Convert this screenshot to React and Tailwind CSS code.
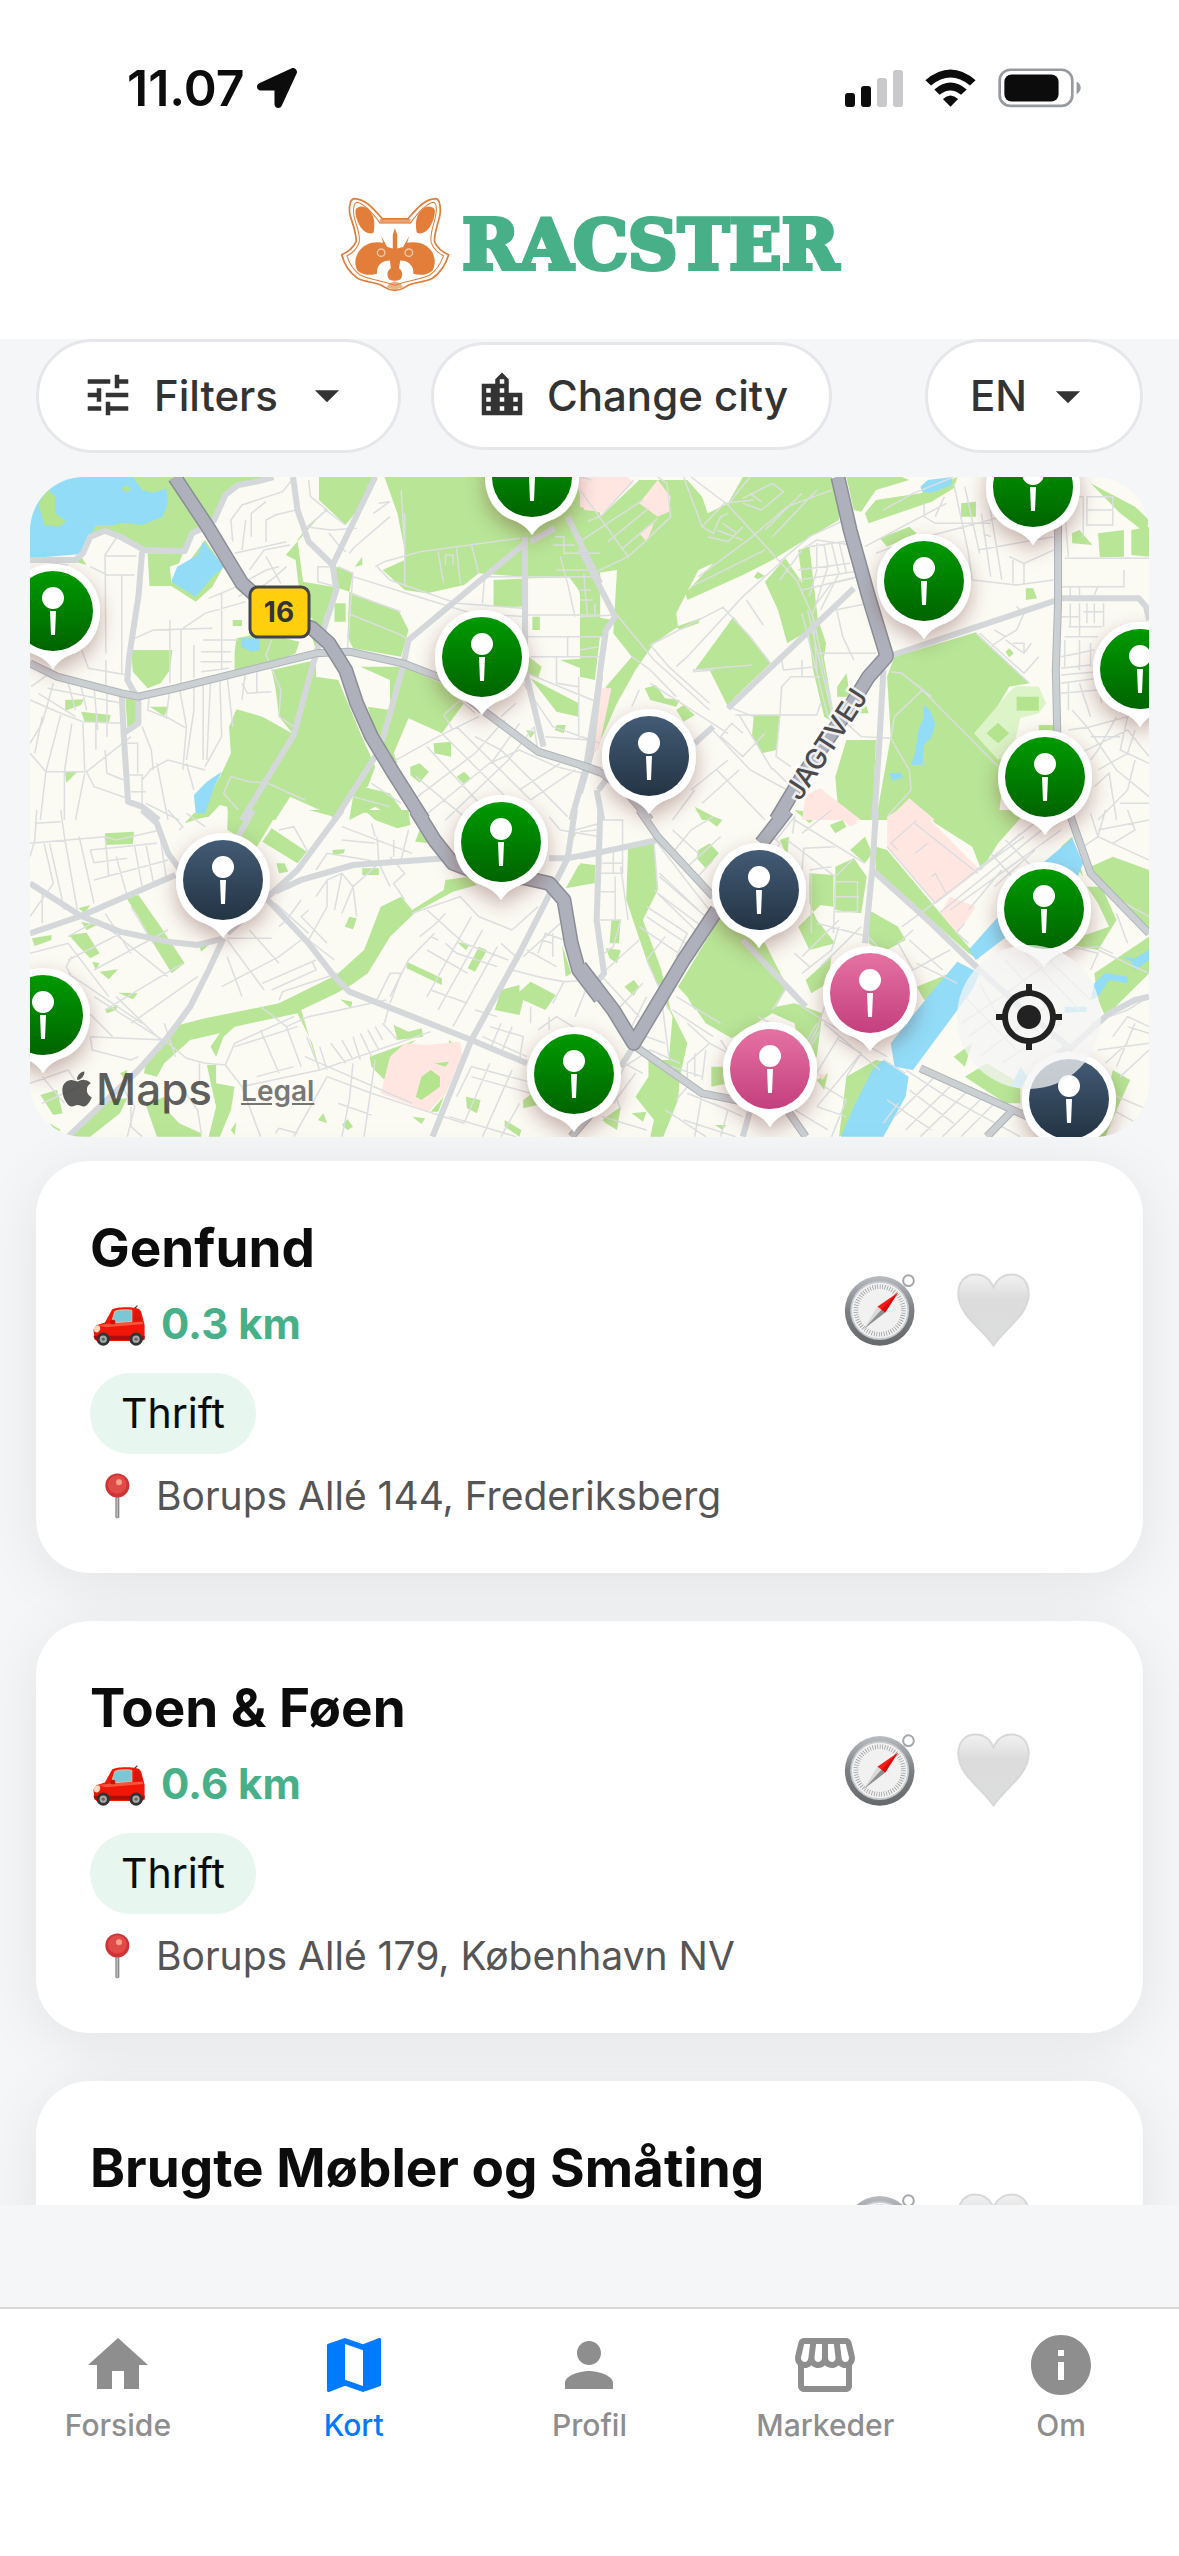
import { useState } from "react";
import {
  MdArrowDropDown,
  MdHome,
  MdInfo,
  MdLocationCity,
  MdMap,
  MdMyLocation,
  MdPerson,
  MdStorefront,
  MdTune,
} from "react-icons/md";
import { FaApple, FaLocationArrow } from "react-icons/fa";

const shops = [
  { id: 1, name: "Genfund", distance: "0.3 km", type: "Thrift", address: "Borups Allé 144, Frederiksberg" },
  { id: 2, name: "Toen & Føen", distance: "0.6 km", type: "Thrift", address: "Borups Allé 179, København NV" },
  { id: 3, name: "Brugte Møbler og Småting" },
];

const tabs = [
  { label: "Forside", Icon: MdHome },
  { label: "Kort", Icon: MdMap },
  { label: "Profil", Icon: MdPerson },
  { label: "Markeder", Icon: MdStorefront },
  { label: "Om", Icon: MdInfo },
];

const markers = [
  { x: 502, y: 0, color: "green" },
  { x: 1003, y: 10, color: "green" },
  { x: 23, y: 134, color: "green" },
  { x: 894, y: 104, color: "green" },
  { x: 452, y: 180, color: "green" },
  { x: 1110, y: 192, color: "green" },
  { x: 619, y: 279, color: "navy" },
  { x: 1015, y: 300, color: "green" },
  { x: 471, y: 365, color: "green" },
  { x: 193, y: 403, color: "navy" },
  { x: 729, y: 413, color: "navy" },
  { x: 1014, y: 432, color: "green" },
  { x: 840, y: 516, color: "pink" },
  { x: 13, y: 538, color: "green" },
  { x: 740, y: 592, color: "pink" },
  { x: 544, y: 597, color: "green" },
  { x: 1039, y: 622, color: "navy" },
];

// The map is stored as four tiles, each one with its own coordinates
const tiles = [
  {
    id: "nw",
    transform: "matrix(0.37 0 0 0.3333 -10 -7)",
    parks:
      "M305 21H680L640 42L580 50L550 80L525 145L495 180L470 190L445 240L330 240L270 200L230 178L195 190L165 260L180 285L150 275L190 165L300 150ZM345 250H440L430 280L405 290L410 348H350ZM500 210L550 290L520 350L475 395L405 345L440 300ZM808 21H965L940 80L880 165L808 90ZM985 21H1568V320L1380 325L1280 330V410H1360V320L1240 310L1200 345L1100 370L1040 360L980 300L1040 270V240L1020 130ZM826 118L770 180L750 210L765 335L845 350L850 370L815 460L780 440L752 340L745 270L718 255ZM855 290L900 310L890 365L850 350ZM890 365L1025 425L1050 480L1030 560L900 535L885 500ZM850 400H880V455H850ZM780 450L835 440L820 480L800 540L780 470ZM575 450H600V468H575ZM585 505L650 490L700 500L755 515L745 550L680 580L630 605L580 600V545ZM300 540H412L405 600L380 640L345 655L305 605ZM122 690L172 688L165 705L122 722ZM165 725L245 735L240 758L175 755ZM285 685H325V760L290 770ZM350 710H400L390 738ZM680 600L800 570L800 620L860 630L920 790L960 890L940 950L880 990L855 1050L830 1030L730 980L690 1050H610L660 940L740 795L700 740L690 650ZM585 718L655 740L735 790L740 820L670 940L600 1050H565L560 1010L540 1005L510 1040L455 1050L500 1000L545 910L570 850L565 770ZM890 590L1035 590L1140 640L1200 700L1140 790L1050 745L1010 850L1020 880L975 850L940 710L1000 720L1000 630L920 590ZM905 945L1000 970L1050 1050H1020L960 1010L890 1050ZM1055 890L1080 880L1105 905L1080 938L1055 915ZM1118 820L1165 815L1165 860L1120 850ZM1180 920L1200 905L1218 925L1200 943ZM1368 780L1392 785L1380 805ZM1375 560L1410 590L1400 625L1370 610ZM1460 570L1545 565L1555 630L1515 595ZM1380 625L1510 700L1510 740L1450 725ZM122 905L155 905L125 938ZM1450 765L1475 765L1470 790L1445 780ZM1505 260L1568 320V500L1530 440L1510 360L1470 300ZM1385 440H1405V480H1385ZM905 290L925 260L925 285Z",
    water:
      "M27 21H305L330 60L360 68L395 55L400 100L385 140L330 165L285 158L250 165L205 165L190 200L165 252L27 265ZM495 215L552 290L520 320L475 380L408 335L425 290L480 255ZM597 505H648V540L625 545L597 530ZM545 905L525 950L500 1030L475 1030L470 975L505 935Z",
    islands: "M50 100L75 60L95 80L95 130L125 155L105 170L65 165ZM275 55L285 45L300 58L288 68Z",
    built: "M1500 21H1568V125L1525 120Z",
    streets:
      "M265 195L230 255L232 550M230 258H315M190 290L235 315H310M275 315V610M140 480L160 520L185 595L290 615M232 570V670M30 270L130 285M310 505L360 480L520 475M405 450V640M435 480V640M470 525V625M495 510H590M490 545H570M488 575H572M490 605L565 595M440 475L500 430L610 395M545 370V600M510 385L575 355L665 300L700 290M580 250L720 215M620 300L660 240L730 225M575 215L570 150L600 105L710 65L735 30M625 200V130L665 95M665 215V150L690 135L745 120M610 150L600 240M630 370L690 320L720 290M665 260L705 340M590 380L640 345M780 30L785 80L830 120L770 175M820 115L880 165M770 170L840 180L910 175M835 190L865 230L880 245M890 250L905 230L1000 140M955 130L1000 95L970 100M960 290L985 275L1080 245L1350 205M965 290L1000 330L1180 400L1360 415M900 320L1060 375L1220 430L1370 440M890 370L1030 425M885 430L1020 490L1045 505M860 290L900 310L885 535M845 290L805 290V335L855 350M1040 130V350M1030 60L1040 240M1130 245L1145 340M1180 235L1190 340M1150 285V255H1170V285M1220 225L1240 310M1245 320H1568M1255 330L1250 400M1445 200H1470V250H1568M1460 260L1480 340L1500 440M1440 225H1500M1450 300H1550M1370 435H1568M1370 500H1568M1380 560H1568M1450 560V640L1510 650M1480 500V560M1370 610L1568 700M1360 640L1440 770L1568 820M1510 620V810M680 510L665 555L705 660L700 740L740 770L740 795M600 640L615 670L680 665M640 600V670M610 600L600 690M470 650V720L450 870M495 640V870M515 630L505 870M540 625L545 800L500 890M560 620L575 770M430 650L450 770L440 900M405 660L395 740L450 775M350 670L345 720L400 745M30 650L80 610M50 670L150 740M27 690L110 730L170 755L275 760M90 640L60 760L27 820M130 640L150 720M165 650L180 720M200 650L210 780M235 660V800M75 655L275 700M27 850L70 905L180 905L300 800M60 740L40 850M110 735L70 905M140 760L120 905M170 760L175 905M205 760V840M180 905L200 950L290 985M70 905L55 1050M120 905V1050M175 910L150 1050M230 840L235 910L280 930M290 820H318V910M295 915H330V1000M300 965H340M330 770L355 840L360 900M350 900L400 870L500 900M330 930L360 890M340 1000L430 1050M370 880L400 1050M450 880L470 960M550 970L570 920L620 935L670 940L770 990M550 970L590 1020M900 980L1000 1010M950 940L1030 1000M1000 880L1130 800L1240 740M1010 900L1070 1050M1070 920L1200 1040M1100 830L1250 1010M1140 790L1330 1000M1180 770L1380 990M1050 1000L1230 850L1310 750M1080 1050L1280 870L1350 760M1150 1050L1320 870L1390 770M1230 800L1300 840L1400 950L1480 1040M1145 735L1190 690L1230 730M1145 735L1170 780M1300 740L1340 700M1270 880L1350 840L1450 890L1520 910M1350 960L1460 880M1380 990L1500 900M1420 800L1540 810M1400 850L1390 770",
    roads:
      "M27 270L60 270L150 270L170 250L190 200L230 182L270 200L335 240L445 243L465 190L495 175L525 150L555 75L590 45L640 35L685 21M330 245L320 380L295 560L290 630L320 690V760L280 790M275 670L280 790L292 995L330 1010L375 1050M738 21L750 120L780 215L845 285L960 21M845 285L855 360L820 480L790 590L740 795L600 1050M1370 215L1050 510L1035 590L985 790L960 860L850 1050M1365 200V600L1415 830M1445 175L1380 215M1480 140L1568 340M1568 620L1530 890L1490 1050",
    mids: "M27 580L100 620L275 670L320 680L420 655L800 550L890 545L1035 580L1140 625L1250 720L1400 845L1530 890L1568 905",
    highways: "M418 21L510 175L600 340L700 440L790 475L835 520L880 600L910 700L950 800L1010 910L1090 1050",
  },
  {
    id: "ne",
    transform: "matrix(0.37 0 0 0.3333 550 -7)",
    parks:
      "M0 120L60 135L160 30H290L330 80L345 130L400 100L440 21H680L700 80L700 150L615 205L520 270L440 315L290 390L285 370L360 280L320 300L260 430L265 470L200 520L150 600L100 700L40 850L70 650L140 560L90 490L100 300L40 310L0 240ZM0 300L40 440L90 450L60 500H0ZM0 490H55L40 630L0 620ZM260 470L325 445L320 460L270 480ZM415 440L515 580L420 680L400 710L350 600L310 600ZM500 335L555 265L620 370L665 520L660 560L620 480L560 520L535 420ZM590 240L620 230L645 470L690 760L660 740L630 600ZM720 21H870L890 30L800 60L760 125L740 120ZM770 130L800 90L920 70L1020 21L1010 55L950 95L780 160ZM810 205L890 170L910 190L830 230ZM1030 100L1070 95V140H1030ZM1330 190L1350 180L1385 225L1330 220ZM1400 190L1470 180V260L1405 262ZM1490 180L1538 170V260L1490 255ZM1380 40L1500 110L1538 150L1530 190L1460 130ZM1205 355H1225L1235 385L1205 390ZM1270 410V440M850 560L1070 487L1215 640L1160 650L1080 800L1150 880L1130 1050H800L840 800L830 620ZM695 650L720 610L730 680H695ZM470 735H540L530 840L490 850L465 795ZM720 810H800L790 1050H700L690 920ZM260 720L280 705L310 735L280 755ZM175 655L205 645L230 685L270 690L260 710L190 690ZM310 1010L380 1050H330ZM730 690L760 660L780 730H730ZM15 500H32V560H15ZM470 320L480 305L500 318L480 328ZM1150 545L1160 535L1172 550L1160 562ZM1240 765H1300V800H1240ZM510 190L560 110L640 60L680 60L680 90L600 160L560 180Z",
    lights: "M1065 790L1165 660L1180 648L1240 650L1260 700L1240 730L1190 745L1170 840L1130 870Z",
    water: "M920 50L940 30L1005 21V45L950 68L925 65ZM930 705L945 720L960 760L950 800L930 825L925 885H895L905 850L915 780L930 740ZM835 910L865 908L873 922L845 933Z",
    islands: "M1180 680H1240V722H1180ZM1098 790L1130 758L1160 790L1130 820Z",
    built: "M0 21H130L145 40L60 130L0 110ZM210 30L245 80L240 125L210 140L160 100ZM160 190L200 160L180 215ZM50 655H85L50 840H35ZM610 975L650 955L690 990L760 1050H600ZM890 985L960 1050H830Z",
    streets:
      "M0 60L130 260L180 210L245 140L235 40L210 21M20 155L60 135L145 30M0 215L40 185L170 90M45 305L130 260M75 215L185 115M115 235L210 145M280 21L330 170L390 100L470 90M300 21L400 105L540 275L585 330L630 440L690 760M400 105L430 60L460 21M330 170L360 190L380 140L400 130M370 180L440 210M385 160L425 190M345 200L400 215L440 170M440 85L520 40L550 65L490 120L440 100M460 70L490 95M500 180L600 70M520 200L640 60M540 275L620 200L715 150M460 205L560 110L680 60M320 320L460 205M300 350L500 240M550 270L440 380L290 560L260 590M390 410L190 525L240 590L350 700M385 410L460 500L515 580M450 390L495 465M600 240L540 330M620 230L740 210M605 235L640 210L735 225M640 220V300L620 380M660 225L670 290L630 430M680 220L700 310L650 420M700 215L720 310M590 300L730 280M590 330L740 305M600 360L750 320M640 400L680 340L740 325M690 400L710 500L740 570M690 420L780 400M640 550H800M600 430L670 740M615 420L685 750M630 440L640 600M545 570L550 600L640 590M600 570V620M545 650L540 740L530 860L570 890M545 650L570 620L650 620M420 735H640L650 700M400 710L470 740M305 600L465 585M360 600L305 605M190 640L400 790M0 440L100 435L200 570L350 720M60 500H0M0 540L50 530M0 20L30 30M0 360H30M0 390H35M10 310L20 440M40 400V440M140 560L190 600L260 680M140 710L160 660M520 895L570 950M410 760L380 800L440 860L500 790M410 760L440 790M350 770L460 900L560 960M430 735L520 900M370 900L500 1050M300 960L400 870M330 1000L430 900M250 1050L310 960M700 740L760 800L840 805M840 805L890 900L895 960L830 1040M840 605L870 610L925 660L850 740L840 805M925 660L1130 890M870 610L950 680M1070 490L1215 640M820 120L900 70L1010 21M770 230L990 100M800 250L870 220L1140 140L1260 110M930 100V140L960 160H1110M985 80L960 140M1010 40L1050 250L1060 330M1040 50L1080 250M1060 330L1180 345L1280 330M1085 130L1110 320M1100 60L1130 260L1140 330M1120 40L1140 140M1160 260L1200 280L1280 240M1170 270V340M1200 280V345M1075 240L1280 200M1090 190L1110 200M1310 120L1320 260M1310 265H1538M1330 80H1360V200M1370 80H1440V165H1370ZM1370 120H1440M1300 350H1470V300M1325 350V390M1350 350V375M1400 350L1390 375M1300 560L1390 540M1310 500H1400M1320 470H1410M1325 400V470M1350 400V500M1370 400V460M1390 400V460M1415 400V470M1300 440H1350M1360 425H1415V460M1310 510V590M1350 510V600M1380 520V590M1300 595L1380 585M1300 615L1400 605M1300 640L1400 625M1300 670L1400 660M1320 640V720M1350 640L1380 740M1400 620L1410 700M1110 530L1150 500L1120 480M1080 490L1200 610L1240 560M1150 500L1180 480L1200 430L1180 410M1150 510L1200 550L1220 520M1170 520H1200V545M1320 780L1380 770L1480 740L1538 720M1330 720L1370 770L1450 900L1538 980M1380 800L1460 800M1350 850L1480 780L1538 860M1380 870L1400 840L1450 740M1480 740L1460 840L1538 880M1400 900L1480 850L1500 780M1390 950L1430 910L1450 1050M1500 870L1480 960L1400 1050M1460 1000H1538",
    roads: "M0 235L95 440L70 480L55 600L30 850L0 970M400 715L740 355M310 820L360 770M820 600L810 800L795 1050M845 555L1060 475L1290 390L1300 385L1510 385L1530 410L1538 450M0 885M45 960L60 1050M50 960L70 930",
    mids: "M1292 130V400L1286 600L1290 790M0 885L60 910L120 960L190 1050",
    highways: "M697 21L730 180L780 380L828 555L828 560L780 620L730 710L600 920L530 1050",
  },
  {
    id: "sw",
    transform: "matrix(0.37 0 0 0.3333 -10 333)",
    parks:
      "M562 0H700L640 110L560 60ZM445 40L470 10L520 0L500 20ZM680 55L775 125L750 160L655 95ZM780 0H860L850 20ZM890 0H1050L1055 45L1020 55L960 30L940 10ZM230 70L308 65L305 102L230 105ZM1080 60L1110 100L1068 95ZM845 120L878 118L875 130L845 135ZM693 160L715 160L725 185L700 190ZM925 175H970V195H925ZM1145 240L1150 210L1210 200L1235 225L1170 245L1070 305L1000 380L940 490L895 525L855 550L760 600L800 750L810 780L790 700L750 610L580 650L550 680L530 740L515 710L540 670L460 690L390 760L370 800L335 790L340 760L430 645L500 625L700 580L855 495L930 420L975 290L1030 260L1060 300ZM890 320L910 325L900 358L878 350ZM288 265L320 255L380 350L445 460L410 490L360 400L320 320ZM158 295L190 285L175 310ZM165 335L208 345L180 360ZM132 375L180 368L215 430L190 445L160 410ZM32 385L85 375L85 390L40 408ZM195 455L215 460L205 480ZM215 485L265 478L240 508ZM265 548L318 550L305 568ZM230 600L265 585L260 600L235 610ZM485 410L510 405L490 425ZM1045 455L1140 505L1140 525L1045 475ZM1180 395L1215 405L1205 420ZM1240 410L1262 420L1230 485L1210 475ZM1482 75L1505 70L1490 90ZM1475 235L1510 165L1555 165L1550 220ZM1300 540L1350 525V545L1380 515L1448 555L1420 600L1360 570L1350 615L1283 600ZM1465 405L1475 500L1490 490ZM865 568L898 575L895 595ZM1010 645L1050 665L1085 655L1090 680L1020 690ZM945 740L1070 690L1000 750L985 810L950 770ZM1160 690L1190 720L1155 720ZM1205 860L1245 870L1235 910L1208 895ZM1360 870L1390 845L1420 880L1360 895ZM1060 920L1095 925L1085 942ZM805 930L820 910L830 940ZM870 945L885 928L900 950L885 960ZM1310 930L1355 960L1350 980L1310 950ZM55 855L100 840L115 910L90 915ZM230 870L290 865L270 910L190 980H140ZM340 885L390 860L405 910L430 940L490 970V980H370ZM505 765H530L530 820L580 830L570 900L540 980H510L530 890ZM80 940L110 960L100 970ZM270 790L290 780L285 810ZM570 960L585 935L580 975Z",
    water: "M475 0H495L485 10Z",
    built: "M1040 700L1100 705L1190 695L1195 740L1150 850L1105 905L975 850L1000 740Z",
    islands: "M1085 800L1110 780L1135 800V830L1085 870L1070 860ZM1120 760L1160 755L1150 770ZM1145 860L1170 790L1130 905L1110 905Z",
    streets:
      "M45 0L40 90L27 140M110 0L120 80L155 300M40 40L110 35M27 100L230 80L260 90L380 60M65 100L90 220L27 320M80 100L120 300M160 80L200 280M190 120L200 158L290 145M190 120L370 100M230 80L240 200M200 210L400 150M260 140L290 260M310 110L330 230M340 100L360 215M380 90L395 200M60 340V250M130 380L210 330L400 500M230 310L300 430M300 290L360 400M130 450L290 360M200 480L400 360M130 490L330 640M200 560L400 700M27 430L130 400L240 560M140 440L125 470L140 500M230 600L440 460M300 640L480 500M190 680L390 690M190 680L195 720L300 750L320 740M260 560L380 690M160 580L250 680M27 520M390 690L450 745L500 760L555 765L580 700L740 620M555 765L600 830L810 780L1110 665M810 780L775 680M600 830L650 980M580 710L750 650M650 590L720 650L760 770M650 660L700 790M720 650L780 620L990 570M700 570L710 545L860 490M545 530L700 440L760 390M600 560L560 440M560 390L660 540M560 385L680 385M620 360L700 460M690 280L780 370M655 520L800 450M680 540L800 480L790 455M760 270L720 330L700 350M780 300L760 320L830 400M800 260L830 210L870 190L900 230M830 210V290L780 390L850 450M850 300L870 190M870 310L900 230L910 320M900 230L970 160L1000 230M800 180L830 130L940 150L970 160L965 80M870 50L1060 130M870 90L960 100M950 40L960 80M1010 90V140M1050 60L1030 150M400 0L440 50L430 60M500 50L450 10M700 60L740 50L780 130M1000 140L1040 190L1010 220L1040 270M1060 310L1190 260L1240 320L1330 360M1100 300L1170 370L1200 400L1320 450M1120 370L1050 450L1000 560M1080 380L1120 345L1150 310M1100 420L1210 490M1110 380L1130 390M1150 400L1180 430L1290 470M1000 490H1030L1000 580M960 580L1000 490M985 640L995 600M1130 600L1250 360M1170 650L1290 410M1110 540L1210 580M1220 320L1100 560M1330 360L1400 290M1360 440L1460 340M1370 420L1450 470M1400 430L1420 370L1470 390M1410 390L1440 400M1440 370V440M1330 480L1400 500L1470 515L1440 580M1380 590V640M1470 515L1540 510L1500 620M1270 650L1360 680L1350 750M1250 680L1370 740M1300 640L1270 720M1330 650L1300 730M1220 800L1380 850M1180 860L1220 770L1390 820M1160 920L1340 980M1200 940L1270 760M1250 980L1330 780M1300 980L1350 880M1400 660L1450 620L1568 700M1430 620V660M980 640L1020 690M960 650L980 690M940 660L970 720M920 670L950 740M900 680L920 750M870 690L900 750M840 700L880 760M810 710L830 780M770 740L1060 880M830 800L950 850L1060 890L1200 940M900 760L890 870L870 980M830 800L740 980M960 750L930 980M690 970L700 955L750 970M860 880L950 915M640 800L740 770M27 820L130 780L160 830L60 880M60 800L120 880M485 760V820M390 640L420 740M300 890L300 950L330 980M270 820L310 890L290 980M430 820L480 900L490 970M1490 0L1500 60L1568 40M1430 20L1460 60L1568 80M1300 400L1350 450M1230 600L1290 620",
    roads:
      "M27 370L165 318L420 195M27 220L165 318L270 365L400 395L480 405L550 385M550 385L510 480L460 590L400 680L320 780L130 980M330 0L370 40L400 130L430 175M630 0L590 80M870 0L750 180L670 260L560 370M690 245L760 210L900 165L1150 145M1430 145H1480L1568 125M670 270L780 400L850 500L890 545L1220 690L1370 760M1220 690L1115 980M1500 0L1480 145L1350 430L1220 690M1568 150",
    mids: "M1490 980L1568 880",
    highways: "M1070 0L1120 90L1170 160L1240 190L1370 205L1430 220L1470 270L1490 400L1510 480L1568 565",
  },
  {
    id: "se",
    transform: "matrix(0.37 0 0 0.3333 550 333)",
    parks:
      "M130 115L200 100L210 240L170 330L220 480L245 600L290 700L270 800L265 870L225 980H190L200 930L150 860L185 800V750L240 750L250 620L180 450L125 270ZM0 160L40 165V220H0ZM85 330H110L105 400H80ZM70 415L110 420L100 460L80 445ZM120 530L145 510L160 530L145 558ZM320 120L350 100L375 130L340 175L315 145ZM310 0L385 30L370 50ZM380 320L500 400L560 530L520 610L410 685L340 640L290 560L265 530ZM290 560L330 590L310 600ZM530 590L580 580L655 610L640 740L600 760L580 640L520 610ZM610 510L680 440L670 520L625 550ZM620 190L685 195V290L650 285L590 350L620 420L690 400L640 330L620 280ZM690 170L740 145L775 200L760 310L690 300ZM730 120L770 80L790 130L770 160ZM580 0L650 10L620 40ZM675 45L710 30L720 50L690 70ZM780 300L860 350L880 390L820 425L780 400ZM800 110L830 120L1080 450L1050 430L800 180ZM905 150L950 145L940 190L905 170ZM980 200L1010 175L1030 210L1010 230ZM930 0H1210L1130 100L1085 180L1060 110L960 40ZM910 530L1000 490L1020 480L960 560L930 570ZM1380 170L1440 140L1538 180V370L1460 270L1380 200ZM1300 400L1430 350L1400 280L1370 230H1410L1450 330L1400 420ZM1390 490L1538 380V490L1420 620L1400 570ZM1330 80L1260 150L1300 110L1360 200ZM1040 800L1100 760L1190 820V880L1150 880ZM1440 780L1487 810L1450 900L1420 980H1400ZM1010 740L1060 700L1040 770ZM60 930L110 890L100 960L70 940ZM140 910L180 905L170 935ZM365 945L395 945L385 960ZM355 770H385L400 820L355 830ZM640 810L670 790L660 840ZM540 90L565 80L560 140ZM720 800L800 750L840 760L800 800L720 970L700 980Z",
    water: "M1330 85L1360 160L1345 200L1255 155ZM1255 170L1130 320L1050 420L1070 450L1200 340ZM1020 455L1080 490L1060 540L900 780L850 770L840 700L940 560ZM820 750L888 800L880 860L820 980H705L740 890L790 780ZM1390 520L1420 488L1480 500V520L1430 510L1400 560L1380 570ZM1465 440L1500 445L1538 420V450L1500 480L1490 455ZM1190 770L1210 800L1190 835L1165 830ZM1310 590H1370V605L1310 608Z",
    islands: "",
    built: "M680 0H720L750 40L730 50ZM830 20L860 0H920L1080 180L1000 250L960 280L830 110ZM1000 260L1070 290L1020 370L975 310ZM640 790L665 795L655 810Z",
    streets:
      "M0 65L45 60M60 30H115V190H55M90 120V190M60 160H115M55 245H95M55 330H110L90 410L65 430M95 200V330M110 170L130 330M200 100L210 240M210 100L300 230L350 300M215 190L320 300M180 290L290 370L260 440M200 240L340 390M160 350L280 440M180 320L300 410M210 250L330 350M215 200L350 330M230 380L180 450L240 600M215 520L240 740M160 390L60 490L40 520L130 650M60 500L160 620M170 520L100 600M180 560L140 650M250 130L300 60L360 20M280 180L380 80M310 210L360 150M250 60L320 130M500 60L540 100L520 140M600 180L605 115L690 110M620 180L680 170M625 190V370M690 200L685 370M690 215H750V305H690M690 260H755M560 90L690 200L740 145M575 70L580 20L530 90M580 30L770 160M680 0L600 70M640 340L780 380L820 430M650 470L760 350M600 440L700 330M580 430L620 470M600 490L680 420L700 350M560 530L520 600M600 590L670 640L830 740M640 640L610 700M670 560L640 660L600 740M660 640L810 780M590 770L650 660M600 860L700 680M700 690L760 730L720 800M760 730L640 890M660 830L720 870L680 980M640 890L720 920M580 900L670 960M900 360L860 400L900 480L1000 420M870 350L920 310L1100 160L1200 80M910 460L1020 520M890 390L980 480M960 280L1250 20M970 310L1270 40M1000 300L1300 60M1080 180L1190 70M1120 230L1230 120M1050 300L1140 180M1110 130L1200 240M1150 90L1230 180M860 120L840 100L910 30M905 130L940 100M950 200L960 190L990 250M830 110L960 280M905 40L1075 190M1015 370L1040 340M1020 370L1050 400M880 780L990 860L1190 980M890 840L1010 940M850 920L960 800M880 960L1000 830M920 980L1060 830M980 980L1100 850M1030 980L1120 880M830 870L950 960M820 750L880 790M860 880L820 940M270 760L190 720L120 770L90 840L110 900M130 660L230 700M120 760L170 790M290 640L350 700L290 760M290 760V830L260 870M350 700L420 740M260 560L380 640M250 600L360 680M330 850L310 980M290 850L400 900L380 980M230 900L340 980M150 790L90 880M60 920L180 960M360 880L440 920M280 930L420 980M220 760L330 800M310 730V800M340 720L330 810M480 620L590 680M380 690L410 740M1380 10L1400 80L1538 150M1360 110L1400 80L1420 0M1480 0L1500 60L1440 100M1400 60L1538 30M1380 200L1440 260L1538 320M1450 310L1480 400M1400 420L1538 490M1330 410L1400 430L1380 480M1300 420L1400 410L1440 430M1380 640L1480 600L1538 560M1440 680L1480 620L1538 650M1400 720L1538 700M1420 760L1480 700M1460 800L1538 720M1480 650L1538 670M1500 640L1450 770M1430 850L1538 900M1440 900L1538 960M1100 500L1250 680M1150 450L1300 640M1180 400L1350 600M1220 400L1380 570M1040 560L1180 720M1080 520L1130 620M1030 640L1140 560L1300 430M1050 680L1200 560M1080 740L1270 580M1140 760L1300 640",
    roads: "M0 140L210 90M55 0L45 330L65 490L50 510M800 0L790 180L770 400M790 180L940 330L1080 480L1200 600L1320 710L1290 730M440 390L610 590M110 770L150 700M1320 720L1430 610L1500 570L1538 560M460 900L440 980",
    mids: "M160 0L210 80L360 260M150 710L330 850L420 870L560 900L610 980M920 775L1150 890L1230 930M1320 0L1380 190L1538 370M1170 900L1100 980",
    highways: "M0 470L90 600L145 700L280 450L370 300M560 0L490 100",
  },
];

const pinColors = { green: "url(#pinGreen)", navy: "url(#pinNavy)", pink: "url(#pinPink)" };

const MapLayer = ({ name, ...props }) => (
  <g {...props}>
    {tiles.map((tile) =>
      tile[name] ? (
        <path key={tile.id} d={tile[name]} transform={tile.transform} vectorEffect="non-scaling-stroke" />
      ) : null
    )}
  </g>
);

const Marker = ({ x, y, color }) => (
  <g transform={`translate(${x} ${y})`}>
    <path
      d="M0 -47A47 47 0 0 1 47 0C47 21 36 36 22 42C11 46 5 50 0 58C-5 50 -11 46 -22 42C-36 36 -47 21 -47 0A47 47 0 0 1 0 -47Z"
      fill="#fff"
      filter="url(#pinShadow)"
    />
    <circle r="40" fill={pinColors[color]} />
    <circle cy="-13" r="11" fill="#fff" />
    <path d="M-3 0H3L2 24H-2Z" fill="#fff" />
  </g>
);

const CityMap = () => (
  <svg viewBox="0 0 1119 660" preserveAspectRatio="xMidYMid slice" className="block h-full w-full" role="img" aria-label="Map of shops">
    <defs>
      <linearGradient id="pinGreen" x2="0" y2="1">
        <stop offset="0" stopColor="#009a00" />
        <stop offset="1" stopColor="#006400" />
      </linearGradient>
      <linearGradient id="pinNavy" x2="0" y2="1">
        <stop offset="0" stopColor="#435b75" />
        <stop offset="1" stopColor="#233444" />
      </linearGradient>
      <linearGradient id="pinPink" x2="0" y2="1">
        <stop offset="0" stopColor="#e572a3" />
        <stop offset="1" stopColor="#c43f7e" />
      </linearGradient>
      <filter id="pinShadow" x="-50%" y="-50%" width="200%" height="200%">
        <feDropShadow dx="0" dy="8" stdDeviation="10" floodColor="#4a1010" floodOpacity="0.3" />
      </filter>
    </defs>
    <rect width="1119" height="660" fill="#fbfaf3" />
    <MapLayer name="parks" fill="#b8e596" />
    <MapLayer name="lights" fill="#dcf4c8" />
    <MapLayer name="water" fill="#92dcf8" />
    <MapLayer name="built" fill="#ffe6e1" />
    <MapLayer name="islands" fill="#b4e58e" />
    <MapLayer name="streets" fill="none" stroke="#dcdee0" strokeWidth="1.5" />
    <MapLayer name="roads" fill="none" stroke="#d4d8da" strokeWidth="6" strokeLinejoin="round" />
    <MapLayer name="mids" fill="none" stroke="#b0b4ba" strokeWidth="8" strokeLinejoin="round" />
    <MapLayer name="mids" fill="none" stroke="#cbd0d3" strokeWidth="6" strokeLinejoin="round" />
    <MapLayer name="highways" fill="none" stroke="#8b8e96" strokeWidth="15" strokeLinejoin="round" />
    <MapLayer name="highways" fill="none" stroke="#aeb1bb" strokeWidth="12" strokeLinejoin="round" />

    <rect x="220" y="110" width="59" height="50" rx="8" fill="#ffcf0d" stroke="#444" strokeWidth="3" />
    <text x="249" y="145" textAnchor="middle" fontSize="28" fontWeight="700" fill="#333">
      16
    </text>
    <text
      transform="translate(770 325) rotate(-57)"
      fontSize="28"
      fontWeight="500"
      fill="#4a4a4a"
      stroke="#fff"
      strokeOpacity="0.8"
      strokeWidth="5"
      paintOrder="stroke"
    >
      JAGTVEJ
    </text>

    {markers.map((marker) => (
      <Marker key={`${marker.x}-${marker.y}`} {...marker} />
    ))}
  </svg>
);

const Raccoon = () => (
  <svg viewBox="56 55 321 276" className="h-[95px] w-[110px]" aria-hidden="true">
    <g fill="none" stroke="#e27d3a" strokeWidth="5" strokeLinejoin="round">
      <path d="M180 118H254C275 95 300 60 335 59C350 60 350 95 347 110C343 130 330 160 332 185C340 205 355 215 373 223C365 250 350 275 325 292C300 303 275 303 255 312C240 320 240 326 216 327C192 326 192 320 177 312C157 303 132 303 108 292C83 275 68 250 61 223C78 215 93 205 103 185C105 160 92 130 86 110C82 95 82 60 98 59C133 60 158 95 180 118Z" />
      <path d="M172 130H262C280 105 305 75 328 70C340 72 338 98 334 115C328 140 318 160 322 187C330 210 345 220 358 226C350 248 338 268 318 282C290 296 265 295 216 312C167 295 142 296 115 282C95 268 83 248 76 226C90 220 103 210 112 187C116 160 104 140 98 115C94 98 94 72 106 70C129 75 154 105 172 130Z" strokeWidth="3" />
    </g>
    <g fill="#e27d3a">
      <path d="M102 90C112 78 132 80 145 98C158 115 158 135 154 158C145 164 128 160 118 145C108 130 98 105 102 90Z" />
      <path d="M332 90C322 78 302 80 289 98C276 115 276 135 280 158C289 164 306 160 316 145C326 130 336 105 332 90Z" />
      <path d="M216 145L223 165V205L240 200L258 168L252 188C280 182 310 190 325 215C335 235 335 255 325 270C305 285 285 282 270 278C272 255 255 240 232 240L228 262C240 270 240 285 232 295C222 300 210 300 200 295C192 285 192 270 204 262L202 240C178 240 162 255 164 278C148 282 128 285 108 270C98 255 98 235 110 215C125 190 155 182 182 188L176 168L194 200L210 205V165Z" />
      <path d="M172 118H262V131H172Z" opacity="0.7" />
      <path d="M200 306L216 300L233 306L240 318L216 325L192 318Z" opacity="0.6" />
    </g>
    <g fill="#e27d3a" stroke="#f4c8a8" strokeWidth="4">
      <circle cx="176" cy="217" r="11" />
      <circle cx="257" cy="217" r="11" />
    </g>
  </svg>
);

const CarIcon = () => (
  <svg viewBox="38 50 162 128" className="mt-[3px] h-[42px] w-[54px]" aria-hidden="true">
    <path d="M165 62L175 52" stroke="#444" strokeWidth="4" />
    <path d="M44 150L41 125L50 112L76 103L98 64C105 58 130 55 165 58C180 60 186 64 188 76L197 110V150L190 160H50Z" fill="#f01709" />
    <path d="M96 104L106 70C115 64 140 64 158 66V101Z" fill="#7cc7d6" stroke="#e7c3a6" strokeWidth="3" />
    <path d="M168 66L180 68L188 98L164 101Z" fill="#d8150b" />
    <path d="M52 112L94 106L190 101L194 108L80 118Z" fill="#f6553c" />
    <ellipse cx="52" cy="123" rx="9" ry="11" fill="#f8d9c4" transform="rotate(30 52 123)" />
    <ellipse cx="100" cy="102" rx="8" ry="7" fill="#c8120b" />
    <path d="M41 144H197V156H45Z" fill="#a60f0a" />
    <circle cx="71" cy="154" r="20" fill="#333" />
    <circle cx="71" cy="154" r="11" fill="#aaa" />
    <circle cx="71" cy="154" r="5" fill="#666" />
    <circle cx="171" cy="154" r="20" fill="#333" />
    <circle cx="171" cy="154" r="11" fill="#aaa" />
    <circle cx="171" cy="154" r="5" fill="#666" />
  </svg>
);

const PushpinIcon = () => (
  <svg viewBox="76 545 75 137" className="h-[46px] w-[25px]" aria-hidden="true">
    <rect x="107" y="610" width="12" height="70" rx="4" fill="#8b8787" />
    <rect x="111" y="610" width="3" height="68" fill="#d5d5d5" />
    <circle cx="113" cy="582" r="36" fill="#cf3336" />
    <circle cx="113" cy="579" r="28" fill="#e04a47" />
    <circle cx="118" cy="572" r="9" fill="#f9a08c" />
  </svg>
);

const CompassIcon = () => (
  <svg viewBox="134 100 214 218" className="h-[73px] w-[72px]" aria-hidden="true">
    <defs>
      <linearGradient id="compassRim" x2="0" y2="1">
        <stop offset="0" stopColor="#b9bcc1" />
        <stop offset="0.5" stopColor="#7b7e82" />
        <stop offset="1" stopColor="#66696c" />
      </linearGradient>
    </defs>
    <circle cx="326" cy="120" r="16" fill="none" stroke="#a4a7ab" strokeWidth="6" />
    <circle cx="240" cy="210" r="104" fill="url(#compassRim)" />
    <circle cx="240" cy="209" r="88" fill="#c6c8ca" />
    <circle cx="240" cy="209" r="83" fill="#f1f1f2" />
    <circle cx="240" cy="209" r="71" fill="none" stroke="#8f9091" strokeWidth="14" strokeDasharray="2 5.4" />
    <path d="M295 155L256 216L233 198Z" fill="#fb1a17" />
    <path d="M295 155L256 216L245 207Z" fill="#d90c0c" />
    <path d="M192 265L233 198L245 207Z" fill="#d9dadb" />
    <path d="M192 265L245 207L256 216Z" fill="#8d8f90" />
  </svg>
);

const HeartIcon = () => (
  <svg viewBox="472 99 220 222" className="h-[74px] w-[73px]" aria-hidden="true">
    <defs>
      <linearGradient id="heartFill" x2="0" y2="1">
        <stop offset="0" stopColor="#f1f1f1" />
        <stop offset="0.35" stopColor="#dcdcdc" />
        <stop offset="1" stopColor="#dcdddd" />
      </linearGradient>
    </defs>
    <path
      d="M582 317C560 285 520 252 497 220C483 200 476 185 476 160C476 125 497 103 527 103C553 103 572 118 582 142C592 118 611 103 637 103C667 103 688 125 688 160C688 185 681 200 667 220C644 252 604 285 582 317Z"
      fill="url(#heartFill)"
      stroke="#d7d8d9"
      strokeWidth="6"
    />
  </svg>
);

const StatusBar = () => (
  <div className="flex h-[176px] items-center justify-between pr-[98px] pl-[127px]">
    <div className="flex items-center gap-3 text-[50px] leading-[60px] font-semibold text-[#0c0c0c]">
      <span>11.07</span>
      <FaLocationArrow className="size-[40px]" />
    </div>
    <div className="flex items-center gap-[22px]">
      <svg viewBox="0 0 58 38" className="h-[38px] w-[58px]" aria-label="Signal">
        <rect x="0" y="24" width="10" height="14" rx="3" fill="#0c0c0c" />
        <rect x="16" y="17" width="10" height="21" rx="3" fill="#0c0c0c" />
        <rect x="32" y="9" width="10" height="29" rx="3" fill="#c9c9cb" />
        <rect x="48" y="1" width="10" height="37" rx="3" fill="#c9c9cb" />
      </svg>
      <svg viewBox="258 55 154 115" className="h-[38px] w-[51px]" aria-label="Wi-Fi">
        <g fill="#0c0c0c">
          <path d="M259 89Q335 24 411 89L394 105Q335 57 276 105Z" />
          <path d="M286 117Q335 75 384 117L367 133Q335 107 302 133Z" />
          <path d="M312 146Q335 124 358 146L335 169Z" />
        </g>
      </svg>
      <svg viewBox="476 53 248 119" className="h-[40px] w-[83px]" aria-label="Battery">
        <rect x="481" y="58" width="217" height="108" rx="32" fill="none" stroke="#96999e" strokeWidth="8" />
        <rect x="495" y="72" width="162" height="81" rx="22" fill="#0c0c0c" />
        <path d="M711 93Q723 100 723 112Q723 124 711 131Z" fill="#96999e" />
      </svg>
    </div>
  </div>
);

const ShopCard = ({ shop }) => (
  <article className="flex min-h-[412px] items-start justify-between rounded-[54px] bg-white px-[54px] pt-[54px] pb-[53px] shadow-[0_10px_60px_rgba(0,0,0,0.08)]">
    <div>
      <h2 className="text-[53px] leading-[66px] font-bold text-[#0c0c0c]">{shop.name}</h2>
      {shop.distance && (
        <p className="mt-[18px] flex items-center gap-[15px] pl-[2px] text-[42px] leading-[50px] font-bold text-[#48b088]">
          <CarIcon />
          {shop.distance}
        </p>
      )}
      {shop.type && (
        <span className="mt-6 inline-flex h-[81px] items-center rounded-full bg-[#e7f6ef] px-[31px] text-[41px] text-[#0c0c0c]">
          {shop.type}
        </span>
      )}
      {shop.address && (
        <p className="mt-[18px] flex items-center gap-[26px] pl-[15px] text-[39px] leading-[48px] text-[#555]">
          <PushpinIcon />
          {shop.address}
        </p>
      )}
    </div>
    <div className="mt-[58px] mr-[59px] flex shrink-0 gap-[41px]">
      <button type="button" aria-label={`Directions to ${shop.name}`}>
        <CompassIcon />
      </button>
      <button type="button" aria-label={`Save ${shop.name}`}>
        <HeartIcon />
      </button>
    </div>
  </article>
);

const App = () => {
  const [activeTab, setActiveTab] = useState("Kort");
  const [language, setLanguage] = useState("EN");

  return (
    <div className="flex h-screen flex-col bg-[#f4f6f8] font-['Inter','Liberation_Sans',sans-serif]">
      <header className="h-[339px] shrink-0 bg-white">
        <StatusBar />
        <div className="flex items-center justify-center gap-[12px] pt-[21px]">
          <Raccoon />
          <span className="font-['DejaVu_Serif',serif] text-[69px] leading-[80px] font-bold text-[#48b088] [-webkit-text-stroke:4px_#48b088]">
            RACSTER
          </span>
        </div>
      </header>

      <main className="min-h-0 flex-1 overflow-hidden">
        <div className="flex items-center gap-[30px] px-9 text-[42px] font-medium text-[#333]">
          <button type="button" className="flex h-[114px] items-center rounded-full border-3 border-[#e6e7eb] bg-white px-[42px] pb-[2px]">
            <MdTune className="size-[54px]" />
            <span className="ml-[19px]">Filters</span>
            <MdArrowDropDown className="ml-5 size-[58px]" />
          </button>
          <button type="button" className="flex h-[108px] items-center gap-[18px] rounded-full border-3 border-[#e6e7eb] bg-white px-[41px] pb-[2px]">
            <MdLocationCity className="size-[54px]" />
            Change city
          </button>
          <div className="relative ml-auto h-[114px] w-[218px] rounded-full border-3 border-[#e6e7eb] bg-white">
            <select
              aria-label="Language"
              value={language}
              onChange={(e) => setLanguage(e.target.value)}
              className="h-full w-full appearance-none rounded-full bg-transparent pb-[2px] pl-[42px]"
            >
              <option>EN</option>
              <option>DA</option>
            </select>
            <MdArrowDropDown className="pointer-events-none absolute inset-y-0 right-[43px] my-auto size-[58px]" />
          </div>
        </div>

        <section className="relative mx-[30px] mt-6 aspect-[1119/660] overflow-hidden rounded-[54px]">
          <CityMap />
          <div className="absolute bottom-5 left-[27px] flex items-center gap-[29px] text-[#333]/80">
            <span className="flex items-center text-[44px] leading-[56px] font-medium">
              <FaApple className="-mr-px size-[40px]" />
              Maps
            </span>
            <a href="#legal" className="pt-1 text-[28px] leading-[34px] font-semibold text-[#666]/90 underline">
              Legal
            </a>
          </div>
          <button
            type="button"
            aria-label="My location"
            className="absolute right-12 bottom-12 flex size-[144px] items-center justify-center rounded-full bg-[#f4f4f4]/75 text-[#222]"
          >
            <MdMyLocation className="size-[72px]" />
          </button>
        </section>

        <div className="relative mx-9 mt-6 flex flex-col gap-12">
          {shops.map((shop) => (
            <ShopCard key={shop.id} shop={shop} />
          ))}
        </div>
      </main>

      <nav className="mt-[102px] grid h-[249px] shrink-0 grid-cols-5 border-t-2 border-[#d8d8d8] bg-white">
        {tabs.map(({ label, Icon }) => (
          <button
            key={label}
            type="button"
            onClick={() => setActiveTab(label)}
            className={`flex flex-col items-center pt-5 text-[30px] leading-[36px] font-medium ${
              activeTab === label ? "text-[#007aff]" : "text-[#8e8e8f]"
            }`}
          >
            <Icon className="mb-[6px] size-[72px]" />
            {label}
          </button>
        ))}
      </nav>
    </div>
  );
};

export default App;
